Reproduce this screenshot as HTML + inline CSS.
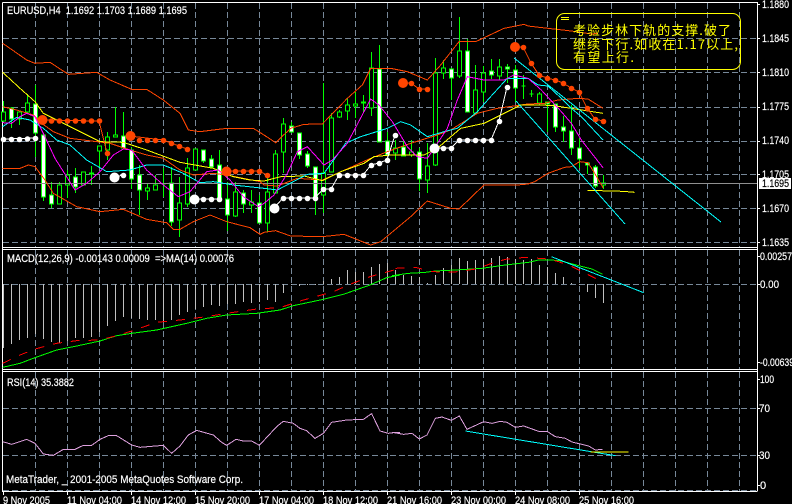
<!DOCTYPE html>
<html><head><meta charset="utf-8"><style>
html,body{margin:0;padding:0;background:#000;width:792px;height:504px;overflow:hidden}
svg{display:block}
text{font-family:"Liberation Sans",sans-serif;font-size:11px;fill:#fff;stroke:#fff;stroke-width:.2;white-space:pre}
text.c{font-family:"WenQuanYi Zen Hei","Noto Sans CJK SC",sans-serif;font-size:13px;fill:#ff0;stroke:none}
polyline{fill:none;vector-effect:non-scaling-stroke;stroke-width:1;shape-rendering:crispEdges}
path,rect{shape-rendering:crispEdges}
</style></head><body>
<svg width="792" height="504" viewBox="0 0 792 504" xmlns="http://www.w3.org/2000/svg">
<rect width="792" height="504" fill="#000"/>
<!-- grid -->
<g stroke="#778899" stroke-width="1" stroke-dasharray="6 3" fill="none">
<path d="M35.5 3V247M67.5 3V247M99.5 3V247M131.5 3V247M163.5 3V247M195.5 3V247M227.5 3V247M259.5 3V247M291.5 3V247M323.5 3V247M355.5 3V247M387.5 3V247M419.5 3V247M451.5 3V247M483.5 3V247M515.5 3V247M547.5 3V247M579.5 3V247M611.5 3V247M643.5 3V247M675.5 3V247M707.5 3V247M739.5 3V247"/>
<path d="M35.5 250V369M67.5 250V369M99.5 250V369M131.5 250V369M163.5 250V369M195.5 250V369M227.5 250V369M259.5 250V369M291.5 250V369M323.5 250V369M355.5 250V369M387.5 250V369M419.5 250V369M451.5 250V369M483.5 250V369M515.5 250V369M547.5 250V369M579.5 250V369M611.5 250V369M643.5 250V369M675.5 250V369M707.5 250V369M739.5 250V369"/>
<path d="M35.5 372V491M67.5 372V491M99.5 372V491M131.5 372V491M163.5 372V491M195.5 372V491M227.5 372V491M259.5 372V491M291.5 372V491M323.5 372V491M355.5 372V491M387.5 372V491M419.5 372V491M451.5 372V491M483.5 372V491M515.5 372V491M547.5 372V491M579.5 372V491M611.5 372V491M643.5 372V491M675.5 372V491M707.5 372V491M739.5 372V491"/>
<path d="M3 38.5H757M3 72.5H757M3 107.5H757M3 141.5H757M3 174.5H757M3 208.5H757M3 242.5H757"/>
<path d="M3 284.5H757M3 408.5H757M3 455.5H757"/>
</g>
<!-- frames -->
<g stroke="#fff" stroke-width="1" fill="none">
<path d="M2.5 2.5H757.5V491.5M2.5 2.5V491.5M2 247.5H757M2 249.5H757M2 369.5H757M2 371.5H757M2 491.5H757"/>
<path d="M757 4.5h3M757 38.5h3M757 72.5h3M757 107.5h3M757 141.5h3M757 174.5h3M757 208.5h3M757 242.5h3M757 256.5h3M757 284.5h3M757 362.5h3M757 379.5h3M757 408.5h3M757 455.5h3M757 485.5h3"/>
<path d="M3.5 491V495M67.5 491V495M131.5 491V495M195.5 491V495M259.5 491V495M323.5 491V495M387.5 491V495M451.5 491V495M515.5 491V495M579.5 491V495"/>
</g>
<path d="M3 490.5H757" stroke="#778899" stroke-dasharray="6 3"/>
<!-- wicks -->
<path stroke="#0f0" fill="none" d="M3.5 101V122M11.5 107V128M19.5 112V125M27.5 94V113M35.5 85V157M43.5 133V201M51.5 182V208M59.5 182V204M67.5 170V198M75.5 168V193M83.5 172V185M91.5 166V185M99.5 147V167M107.5 132V160M115.5 107V137M123.5 112V148M131.5 147V189M139.5 165V215M147.5 183V200M155.5 175V190M163.5 168V197M171.5 167V226M179.5 177V237M187.5 158V207M195.5 149V170M203.5 150V163M211.5 155V168M219.5 150V202M227.5 182V231M235.5 182V217M243.5 190V213M251.5 190V213M259.5 195V223M267.5 177V232M275.5 150V193M283.5 118V173M291.5 122V133M299.5 133V159M307.5 151V168M315.5 167V215M323.5 83V213M331.5 113V172M339.5 110V118M347.5 98V120M355.5 92V118M363.5 95V113M371.5 52V116M379.5 45V142M387.5 132V155M395.5 140V160M403.5 141V156M411.5 140V157M419.5 148V191M427.5 143V193M435.5 58V166M443.5 60V79M451.5 68V100M459.5 17V78M467.5 39V112M475.5 65V113M483.5 66V102M491.5 59V79M499.5 59V80M507.5 64V83M515.5 65V102M523.5 75V99M531.5 90V97M539.5 92V105M547.5 102V132M555.5 104V132M563.5 116V142M571.5 105V155M579.5 138V168M587.5 162V174M595.5 165V188M603.5 175V189"/>
<!-- bull candles (black) -->
<path fill="#000" stroke="#0f0" d="M1.5 112h4v9h-4zM17.5 112h4v7h-4zM25.5 103h4v9h-4zM57.5 185h4v19h-4zM65.5 175h4v10h-4zM81.5 172h4v13h-4zM89.5 173h4v1h-4zM97.5 146h4v5h-4zM105.5 137h4v13h-4zM113.5 135h4v2h-4zM145.5 188h4v3h-4zM153.5 185h4v5h-4zM161.5 184h4v0h-4zM177.5 203h4v17h-4zM185.5 168h4v36h-4zM193.5 149h4v21h-4zM233.5 192h4v24h-4zM249.5 202h4v3h-4zM265.5 192h4v31h-4zM273.5 154h4v39h-4zM281.5 124h4v28h-4zM321.5 173h4v22h-4zM329.5 118h4v54h-4zM337.5 112h4v5h-4zM345.5 105h4v6h-4zM353.5 104h4v2h-4zM361.5 102h4v1h-4zM369.5 68h4v40h-4zM393.5 148h4v5h-4zM409.5 152h4v3h-4zM425.5 166h4v14h-4zM433.5 73h4v92h-4zM441.5 68h4v5h-4zM457.5 51h4v25h-4zM473.5 90h4v23h-4zM481.5 73h4v19h-4zM497.5 67h4v9h-4zM521.5 86h4v0h-4zM529.5 94h4v0h-4zM537.5 94h4v9h-4zM601.5 183h4v2h-4z"/>
<!-- bear candles (white) -->
<path fill="#fff" stroke="#0f0" d="M9.5 108h4v11h-4zM33.5 104h4v29h-4zM41.5 135h4v62h-4zM49.5 195h4v9h-4zM73.5 177h4v10h-4zM121.5 136h4v12h-4zM129.5 150h4v29h-4zM137.5 175h4v15h-4zM169.5 183h4v39h-4zM201.5 150h4v11h-4zM209.5 159h4v8h-4zM217.5 165h4v36h-4zM225.5 199h4v16h-4zM241.5 193h4v11h-4zM257.5 203h4v20h-4zM289.5 126h4v6h-4zM297.5 133h4v22h-4zM305.5 154h4v12h-4zM313.5 167h4v31h-4zM377.5 69h4v73h-4zM385.5 141h4v14h-4zM401.5 147h4v9h-4zM417.5 152h4v27h-4zM449.5 69h4v9h-4zM465.5 51h4v61h-4zM489.5 71h4v4h-4zM505.5 67h4v2h-4zM513.5 70h4v18h-4zM545.5 102h4v2h-4zM553.5 104h4v23h-4zM561.5 127h4v4h-4zM569.5 131h4v17h-4zM577.5 148h4v11h-4zM585.5 163h4v2h-4zM593.5 167h4v19h-4z"/>
<path d="M3 183.5H757" stroke="#909090"/>
<!-- indicator lines: zoom coords -->
<g transform="scale(.33333)">
<polyline stroke="#ff4500" points="8,130 40,152 80,180 105,190 150,187 205,223 290,217 330,240 395,268 440,268 490,300 540,340 565,390 600,395 680,385 760,385 792,405"/>
<polyline stroke="#ff4500" points="8,320 50,330 100,345 125,370 160,395 210,415 290,425 330,430 390,450 440,465 490,475 540,510 580,525 640,520 680,525 780,545 792,555"/>
<polyline stroke="#ff4500" points="8,505 60,505 85,495 105,500 135,540 160,580 230,620 300,635 370,628 440,658 500,668 520,688 540,688 580,665 630,645 680,665 750,683 780,703 792,697"/>
<polyline stroke="#ff0" points="8,217 60,265 105,305 130,340 200,375 300,425 370,427 440,450 540,487 640,505 700,530 750,540 792,543"/>
<polyline stroke="#0ff" points="8,380 50,352 90,360 130,385 170,420 210,435 260,480 320,515 390,510 440,495 490,495 550,520 600,548 640,545 700,555 792,565"/>
<polyline stroke="#f0f" points="8,368 35,370 60,350 80,340 105,350 130,400 165,475 225,570 260,550 300,515 340,465 370,447 395,450 440,510 490,555 535,590 570,575 620,515 655,510 690,540 730,590 775,620 792,610"/>
</g>
<g transform="translate(264,0) scale(.33333)">
<polyline stroke="#ff4500" points="0,405 35,428 80,385 120,373 175,372 250,295 295,255 320,205 380,205 430,215 490,240 530,195 585,125 635,125 720,85 780,73 792,78"/>
<polyline stroke="#ff4500" points="0,555 40,558 100,535 175,540 220,520 320,475 370,455 440,430 520,405 560,390 640,340 700,325 750,318 792,312"/>
<polyline stroke="#ff4500" points="0,697 35,692 80,708 175,710 240,703 320,735 350,725 440,650 490,603 560,625 585,627 660,555 760,555 792,552"/>
<polyline stroke="#ff0" points="0,543 50,530 120,528 175,542 230,515 300,490 330,470 380,465 480,465 520,445 590,385 660,370 770,315 792,315"/>
<polyline stroke="#0ff" points="0,565 40,570 130,523 180,520 245,430 290,410 370,385 410,365 440,375 490,410 540,395 580,385 640,335 680,290 730,235 792,235"/>
<polyline stroke="#f0f" points="0,610 30,585 70,520 100,455 130,440 180,495 205,480 250,430 320,297 345,315 385,365 430,440 460,470 490,475 520,430 550,385 580,300 610,230 660,240 720,240 750,225 792,235"/>
</g>
<g transform="translate(528,0) scale(.33333)">
<polyline stroke="#ff4500" points="0,78 60,85 130,93 190,102 210,100"/>
<polyline stroke="#ff4500" points="0,312 50,310 90,300 150,295 180,297 225,325"/>
<polyline stroke="#ff4500" points="0,552 20,545 60,520 110,502 130,500 155,485 180,488 200,520 225,563"/>
<polyline stroke="#ff0" points="0,315 70,316 130,325 225,340"/>
<polyline stroke="#ff0" points="178,571 285,574 320,577"/>
<polyline stroke="#0ff" points="0,235 30,255 60,258 100,295 130,325 160,350 225,420"/>
<polyline stroke="#f0f" points="0,235 40,270 100,335 130,370 160,420 225,503"/>
</g>
<!-- trend lines -->
<g stroke="#0ff" fill="none">
<path d="M514 58L721 222"/>
<path d="M516 101L625 224"/>
</g>
<!-- dot connector lines -->
<polyline stroke="#ff4500" points="42,120 99,121 107,153"/>
<polyline stroke="#ff4500" points="130,136 163,140 171,143 187,149"/>
<polyline stroke="#ff4500" points="226,171 259,171 267,175"/>
<polyline stroke="#ff4500" points="403,83 411,83 419,89 427,89"/>
<polyline stroke="#ff4500" points="515,47 523,47 531,63 539,75 547,78 555,80 563,83 571,88 579,92 587,108 595,119 603,121"/>
<polyline stroke="#fff" points="3,139 35,138"/>
<polyline stroke="#fff" points="115,177 123,175"/>
<polyline stroke="#fff" points="194,199 219,199"/>
<polyline stroke="#fff" points="274,208 283,198 315,198 323,189 331,189 339,175 363,175 371,165 379,163 387,160 395,135"/>
<polyline stroke="#fff" points="434,148 451,148 459,140 491,140 499,121 507,87"/>
<!-- orange dots -->
<g fill="#ff4500">
<circle cx="42.5" cy="120" r="5"/><circle cx="515" cy="47" r="5"/><circle cx="403" cy="83" r="5"/><circle cx="130.5" cy="136" r="5"/><circle cx="226.5" cy="171.5" r="5"/>
<circle cx="51.5" cy="121" r="2.8"/><circle cx="59.5" cy="121" r="2.8"/><circle cx="67.5" cy="121" r="2.8"/><circle cx="75.5" cy="121" r="2.8"/><circle cx="83.5" cy="121" r="2.8"/><circle cx="91.5" cy="121" r="2.8"/><circle cx="99.5" cy="121" r="2.8"/><circle cx="107.5" cy="153.5" r="2.8"/>
<circle cx="139.5" cy="140.5" r="2.8"/><circle cx="147.5" cy="140.5" r="2.8"/><circle cx="155.5" cy="140.5" r="2.8"/><circle cx="163.5" cy="140.5" r="2.8"/><circle cx="171.5" cy="143.5" r="2.8"/><circle cx="179.5" cy="146.5" r="2.8"/><circle cx="187.5" cy="149.5" r="2.8"/>
<circle cx="235.5" cy="171.5" r="2.8"/><circle cx="243.5" cy="171.5" r="2.8"/><circle cx="251.5" cy="171.5" r="2.8"/><circle cx="259.5" cy="171.5" r="2.8"/><circle cx="267.5" cy="175.5" r="2.8"/>
<circle cx="411.5" cy="83.5" r="2.8"/><circle cx="419.5" cy="89.5" r="2.8"/><circle cx="427.5" cy="89.5" r="2.8"/>
<circle cx="523.5" cy="47.5" r="2.8"/><circle cx="531.5" cy="63.5" r="2.8"/><circle cx="539.5" cy="75.5" r="2.8"/><circle cx="547.5" cy="78.5" r="2.8"/><circle cx="555.5" cy="80.5" r="2.8"/><circle cx="563.5" cy="83.5" r="2.8"/><circle cx="571.5" cy="88.5" r="2.8"/><circle cx="579.5" cy="92.5" r="2.8"/><circle cx="587.5" cy="108.5" r="2.8"/><circle cx="595.5" cy="119.5" r="2.8"/><circle cx="603.5" cy="121.5" r="2.8"/>
</g>
<!-- white dots -->
<g fill="#fff">
<circle cx="114.5" cy="177.5" r="5"/><circle cx="194.5" cy="199.5" r="5"/><circle cx="274.5" cy="208.5" r="5"/><circle cx="434.5" cy="148.5" r="5"/>
<circle cx="3.5" cy="139.5" r="2.8"/><circle cx="11.5" cy="139.5" r="2.8"/><circle cx="19.5" cy="139.5" r="2.8"/><circle cx="27.5" cy="139" r="2.8"/><circle cx="35.5" cy="138.5" r="2.8"/><circle cx="123.5" cy="175.5" r="2.8"/>
<circle cx="203.5" cy="199.5" r="2.8"/><circle cx="211.5" cy="199.5" r="2.8"/><circle cx="219.5" cy="199.5" r="2.8"/>
<circle cx="283.5" cy="198.5" r="2.8"/><circle cx="291.5" cy="198.5" r="2.8"/><circle cx="299.5" cy="198.5" r="2.8"/><circle cx="307.5" cy="198.5" r="2.8"/><circle cx="315.5" cy="198.5" r="2.8"/><circle cx="323.5" cy="189.5" r="2.8"/><circle cx="331.5" cy="189.5" r="2.8"/><circle cx="339.5" cy="175.5" r="2.8"/><circle cx="347.5" cy="175.5" r="2.8"/><circle cx="355.5" cy="175.5" r="2.8"/><circle cx="363.5" cy="175.5" r="2.8"/><circle cx="371.5" cy="165.5" r="2.8"/><circle cx="379.5" cy="163.5" r="2.8"/><circle cx="387.5" cy="160.5" r="2.8"/><circle cx="395.5" cy="135.5" r="2.8"/>
<circle cx="443.5" cy="148.5" r="2.8"/><circle cx="451.5" cy="148.5" r="2.8"/><circle cx="459.5" cy="140.5" r="2.8"/><circle cx="467.5" cy="140.5" r="2.8"/><circle cx="475.5" cy="140.5" r="2.8"/><circle cx="483.5" cy="140.5" r="2.8"/><circle cx="491.5" cy="140.5" r="2.8"/><circle cx="499.5" cy="121.5" r="2.8"/><circle cx="507.5" cy="87.5" r="2.8"/>
</g>
<!-- MACD histogram -->
<path stroke="#c0c0c0" fill="none" d="M3.5 284V348M11.5 284V344M19.5 284V340M27.5 284V338M35.5 284V334M43.5 284V339M51.5 284V342M59.5 284V343M67.5 284V341M75.5 284V338M83.5 284V338M91.5 284V337M99.5 284V332M107.5 284V326M115.5 284V321M123.5 284V317M131.5 284V318M139.5 284V319M147.5 284V320M155.5 284V320M163.5 284V321M171.5 284V320M179.5 284V315M187.5 284V312M195.5 284V309M203.5 284V307M211.5 284V305M219.5 284V306M227.5 284V304M235.5 284V304M243.5 284V302M251.5 284V303M259.5 284V302M267.5 284V300M275.5 284V302M283.5 284V293M291.5 284V285M299.5 284V286M307.5 284V285M315.5 284V285M323.5 281V284M331.5 279V284M339.5 277V284M347.5 270V284M355.5 272V284M363.5 272V284M371.5 267V284M379.5 264V284M387.5 263V284M395.5 270V284M403.5 275V284M411.5 276V284M419.5 277V284M427.5 283V284M435.5 275V284M443.5 268V284M451.5 265V284M459.5 258V284M467.5 261V284M475.5 260V284M483.5 259V284M491.5 258V284M499.5 256V284M507.5 257V284M515.5 259V284M523.5 260V284M531.5 259V284M539.5 265V284M547.5 267V284M555.5 273V284M563.5 277V284M571.5 283V284M579.5 284V285M587.5 284V292M595.5 284V298M603.5 284V303"/>
<g transform="translate(0,245) scale(.33333)">
<polyline stroke="#0f0" points="8,367 60,355 105,338 170,315 230,303 300,288 350,272 395,265 470,255 560,235 620,220 680,210 770,205 840,195 880,182 970,163 1030,148 1110,120 1160,98 1200,90"/>
<polyline stroke="#f00" stroke-dasharray="9 9" points="8,355 60,330 105,312 170,295 230,287 300,285 350,272 395,258 470,232 540,225 620,215 680,205 770,192 840,188 900,168 1000,140 1050,118 1110,95 1200,70"/>
</g>
<g transform="translate(392,245) scale(.33333)">
<polyline stroke="#0f0" points="0,92 50,85 100,82 130,78 190,75 270,70 340,60 410,52 440,45 500,46 560,62 600,72 632,88"/>
<polyline stroke="#f00" stroke-dasharray="9 9" points="10,70 70,67 90,72 110,78 150,82 200,80 250,72 300,55 340,43 400,37 470,42 500,50 540,65 580,85 620,105"/>
<polyline stroke="#0ff" points="478,35 755,143"/>
</g>
<!-- RSI -->
<g transform="translate(0,370) scale(.33333)">
<polyline stroke="#dda0dd" points="8,215 35,223 80,208 105,220 130,252 160,256 190,238 225,238 250,226 275,226 300,208 325,197 350,197 395,225 420,232 490,226 515,250 540,228 565,195 590,181 640,195 665,217 680,226 708,208 730,213 755,213 778,226 830,170 850,154 880,160 900,175 920,182 945,205 970,190 995,157 1040,150 1090,148 1115,131 1140,183 1165,190 1190,187 1200,188"/>
</g>
<g transform="translate(392,370) scale(.33333)">
<polyline stroke="#dda0dd" points="0,187 35,193 60,190 82,207 105,195 130,145 150,141 178,151 202,138 225,178 275,155 300,160 325,154 345,157 370,172 395,168 440,184 465,184 490,200 520,205 540,216 590,228 610,240 632,238"/>
<polyline stroke="#0ff" points="220,183 670,257"/>
<polyline stroke="#ff0" points="595,246 710,246"/>
</g>
<!-- annotation -->
<rect x="556.5" y="13.5" width="184" height="56" rx="8" ry="8" fill="none" stroke="#ff0" style="shape-rendering:auto"/>
<path d="M561 17.5h8M561 19.5h8" stroke="#ff0"/>
<text class="c" x="573" y="35" textLength="158" lengthAdjust="spacing">考验步林下轨的支撑.破了</text>
<text class="c" x="573" y="49" textLength="165" lengthAdjust="spacing">继续下行.如收在1.17以上,</text>
<text class="c" x="573" y="62" textLength="61" lengthAdjust="spacing">有望上行.</text>
<!-- labels -->
<text x="7" y="14" textLength="180" lengthAdjust="spacingAndGlyphs">EURUSD,H4  1.1692 1.1703 1.1689 1.1695</text>
<text x="7" y="262" textLength="227" lengthAdjust="spacingAndGlyphs">MACD(12,26,9) -0.00143 0.00009  =&gt;MA(14) 0.00076</text>
<text x="7" y="386" textLength="67" lengthAdjust="spacingAndGlyphs">RSI(14) 35.3882</text>
<text x="6" y="483" textLength="237" lengthAdjust="spacingAndGlyphs">MetaTrader, _ 2001-2005 MetaQuotes Software Corp.</text>
<g>
<text x="762" y="8" textLength="27" lengthAdjust="spacingAndGlyphs">1.1880</text>
<text x="762" y="42" textLength="27" lengthAdjust="spacingAndGlyphs">1.1845</text>
<text x="762" y="76" textLength="27" lengthAdjust="spacingAndGlyphs">1.1810</text>
<text x="762" y="110" textLength="27" lengthAdjust="spacingAndGlyphs">1.1775</text>
<text x="762" y="144" textLength="27" lengthAdjust="spacingAndGlyphs">1.1740</text>
<text x="762" y="178" textLength="27" lengthAdjust="spacingAndGlyphs">1.1705</text>
<text x="762" y="212" textLength="27" lengthAdjust="spacingAndGlyphs">1.1670</text>
<text x="762" y="246" textLength="27" lengthAdjust="spacingAndGlyphs">1.1635</text>
</g>
<rect x="759" y="178" width="32" height="11" fill="#fff"/>
<text x="762" y="187" textLength="27" lengthAdjust="spacingAndGlyphs" style="fill:#000;stroke:#000">1.1695</text>
<text x="760" y="260" textLength="32" lengthAdjust="spacingAndGlyphs">0.00257</text>
<text x="760" y="288" textLength="19" lengthAdjust="spacingAndGlyphs">0.00</text>
<text x="760" y="366" textLength="34" lengthAdjust="spacingAndGlyphs">-0.00639</text>
<text x="760" y="383" textLength="14" lengthAdjust="spacingAndGlyphs">100</text>
<text x="759" y="412" textLength="11" lengthAdjust="spacingAndGlyphs">70</text>
<text x="759" y="459" textLength="11" lengthAdjust="spacingAndGlyphs">30</text>
<text x="760" y="489">0</text>
<g>
<text x="3" y="504" textLength="47" lengthAdjust="spacingAndGlyphs">9 Nov 2005</text>
<text x="67" y="504" textLength="55" lengthAdjust="spacingAndGlyphs">11 Nov 04:00</text>
<text x="131" y="504" textLength="55" lengthAdjust="spacingAndGlyphs">14 Nov 12:00</text>
<text x="195" y="504" textLength="55" lengthAdjust="spacingAndGlyphs">15 Nov 20:00</text>
<text x="259" y="504" textLength="55" lengthAdjust="spacingAndGlyphs">17 Nov 04:00</text>
<text x="323" y="504" textLength="55" lengthAdjust="spacingAndGlyphs">18 Nov 12:00</text>
<text x="387" y="504" textLength="55" lengthAdjust="spacingAndGlyphs">21 Nov 16:00</text>
<text x="451" y="504" textLength="55" lengthAdjust="spacingAndGlyphs">23 Nov 00:00</text>
<text x="515" y="504" textLength="55" lengthAdjust="spacingAndGlyphs">24 Nov 08:00</text>
<text x="579" y="504" textLength="55" lengthAdjust="spacingAndGlyphs">25 Nov 16:00</text>
</g>
</svg>
</body></html>
